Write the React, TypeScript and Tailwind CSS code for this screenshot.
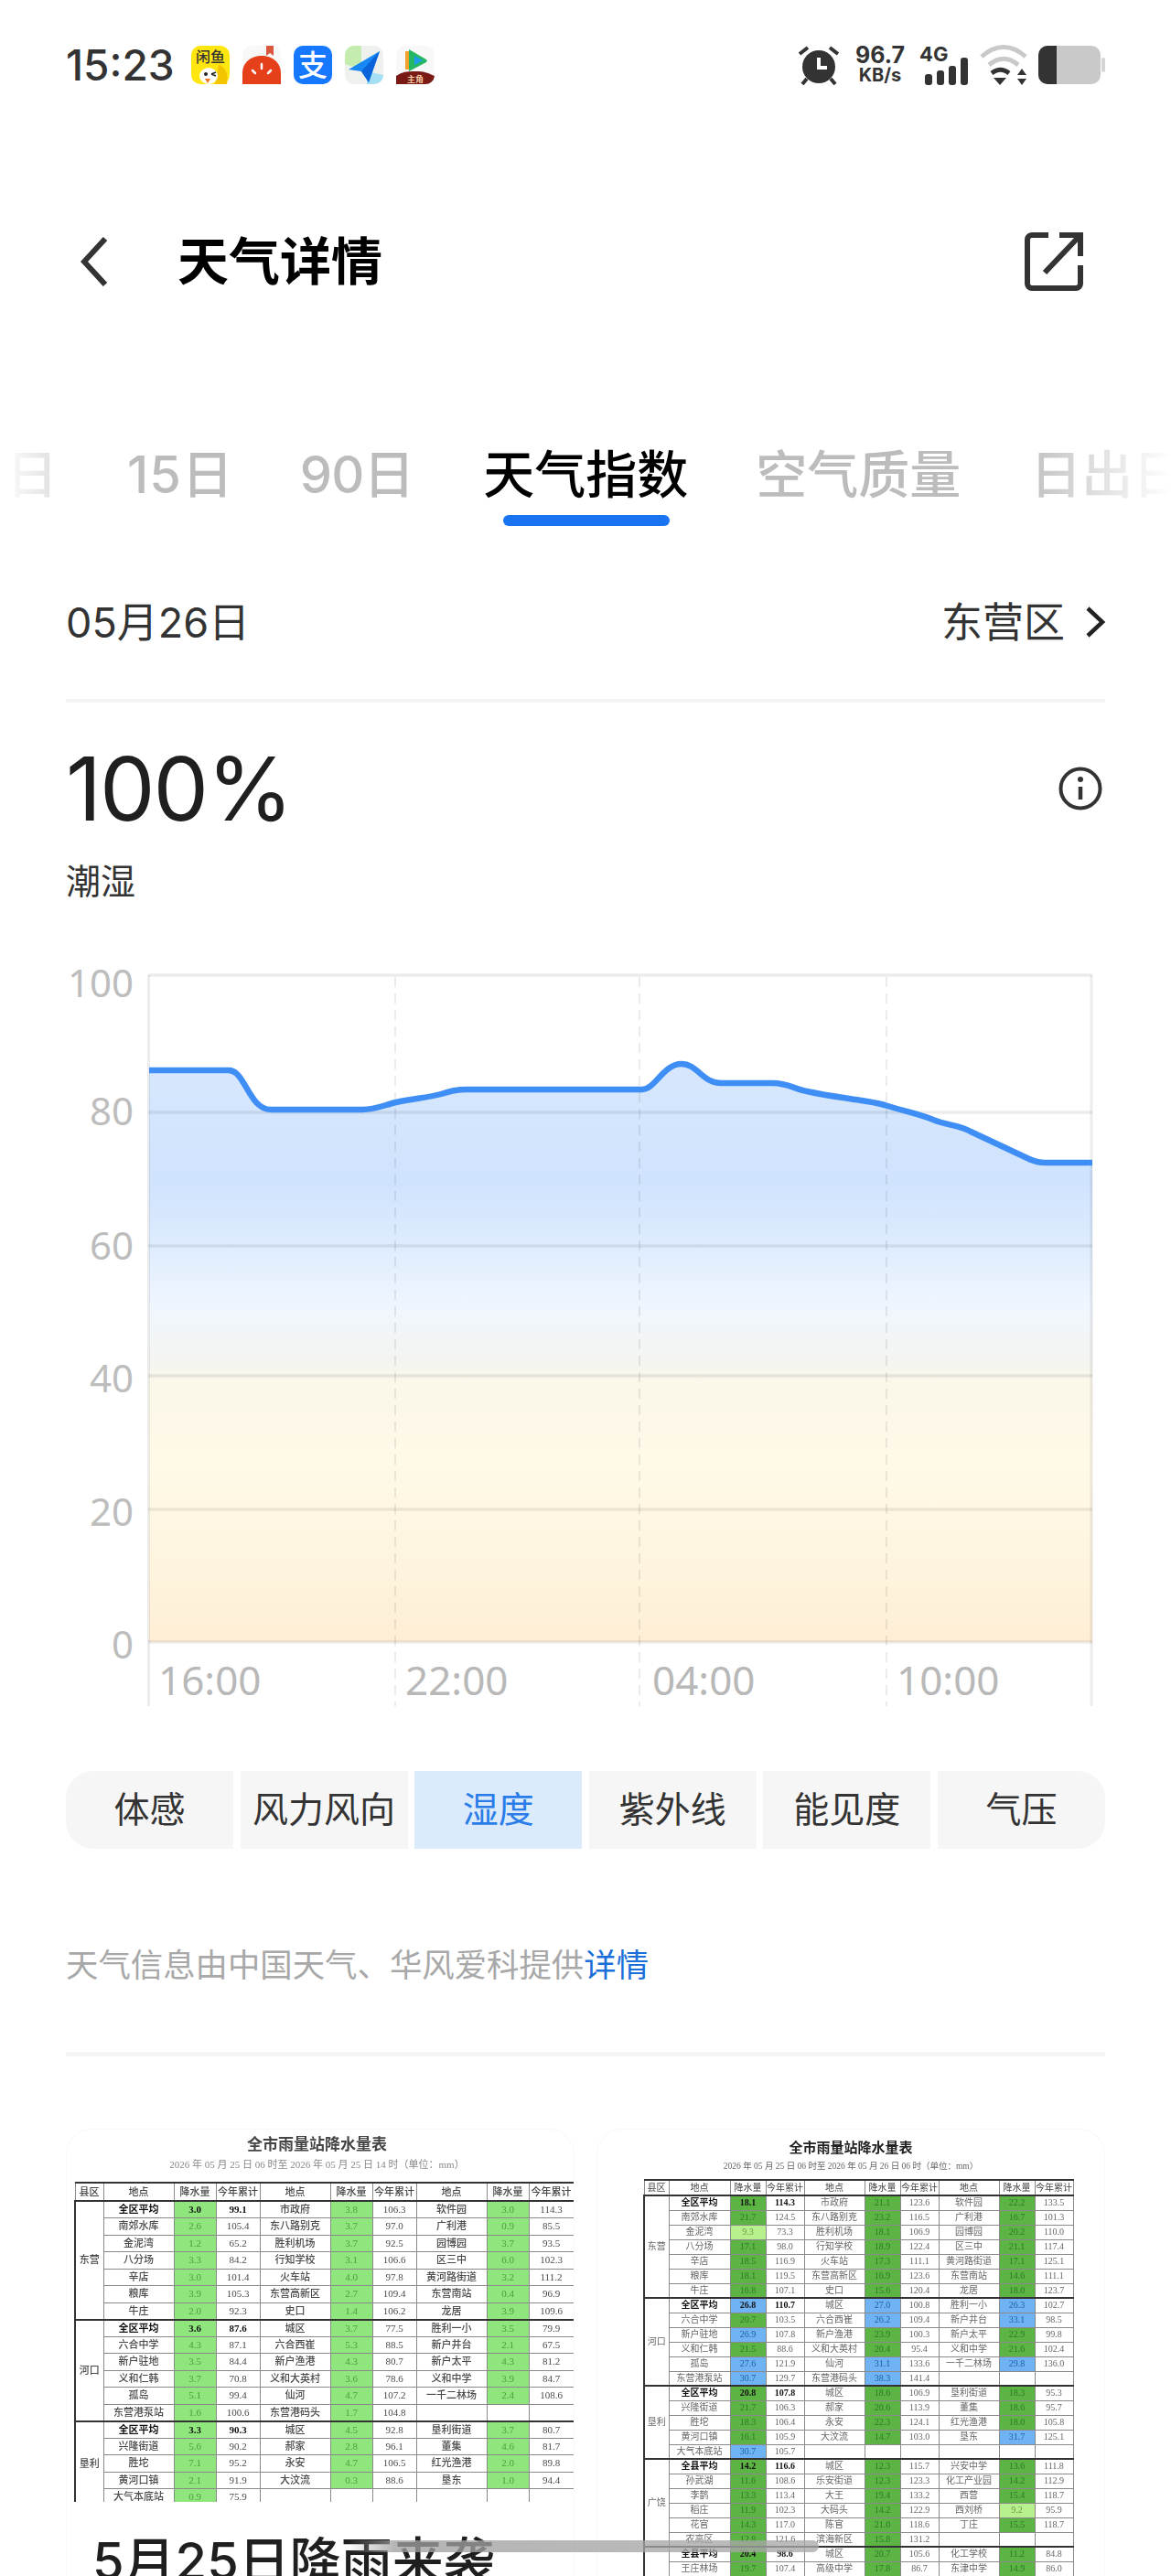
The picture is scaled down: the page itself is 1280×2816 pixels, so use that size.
import React from "react";

type Cell = [string, number, string] | null;
type Group = { name: string; rows: Cell[][] };

const groupsLeft: Group[] = [
  {
    name: "东营",
    rows: [
      [["全区平均", 3.0, "99.1"], ["市政府", 3.8, "106.3"], ["软件园", 3.0, "114.3"]],
      [["南郊水库", 2.6, "105.4"], ["东八路别克", 3.7, "97.0"], ["广利港", 0.9, "85.5"]],
      [["金泥湾", 1.2, "65.2"], ["胜利机场", 3.7, "92.5"], ["园博园", 3.7, "93.5"]],
      [["八分场", 3.3, "84.2"], ["行知学校", 3.1, "106.6"], ["区三中", 6.0, "102.3"]],
      [["辛店", 3.0, "101.4"], ["火车站", 4.0, "97.8"], ["黄河路街道", 3.2, "111.2"]],
      [["粮库", 3.9, "105.3"], ["东营高新区", 2.7, "109.4"], ["东营南站", 0.4, "96.9"]],
      [["牛庄", 2.0, "92.3"], ["史口", 1.4, "106.2"], ["龙居", 3.9, "109.6"]],
    ],
  },
  {
    name: "河口",
    rows: [
      [["全区平均", 3.6, "87.6"], ["城区", 3.7, "77.5"], ["胜利一小", 3.5, "79.9"]],
      [["六合中学", 4.3, "87.1"], ["六合西崔", 5.3, "88.5"], ["新户井台", 2.1, "67.5"]],
      [["新户驻地", 3.5, "84.4"], ["新户渔港", 4.3, "80.7"], ["新户太平", 4.3, "81.2"]],
      [["义和仁韩", 3.7, "70.8"], ["义和大英村", 3.6, "78.6"], ["义和中学", 3.9, "84.7"]],
      [["孤岛", 5.1, "99.4"], ["仙河", 4.7, "107.2"], ["一千二林场", 2.4, "108.6"]],
      [["东营港泵站", 1.6, "100.6"], ["东营港码头", 1.7, "104.8"], null],
    ],
  },
  {
    name: "垦利",
    rows: [
      [["全区平均", 3.3, "90.3"], ["城区", 4.5, "92.8"], ["垦利街道", 3.7, "80.7"]],
      [["兴隆街道", 5.6, "90.2"], ["郝家", 2.8, "96.1"], ["董集", 4.6, "81.7"]],
      [["胜坨", 7.1, "95.2"], ["永安", 4.7, "106.5"], ["红光渔港", 2.0, "89.8"]],
      [["黄河口镇", 2.1, "91.9"], ["大汶流", 0.3, "88.6"], ["垦东", 1.0, "94.4"]],
      [["大气本底站", 0.9, "75.9"], null, null],
    ],
  },
];

const groupsRight: Group[] = [
  {
    name: "东营",
    rows: [
      [["全区平均", 18.1, "114.3"], ["市政府", 21.1, "123.6"], ["软件园", 22.2, "133.5"]],
      [["南郊水库", 21.7, "124.5"], ["东八路别克", 23.2, "116.5"], ["广利港", 16.7, "101.3"]],
      [["金泥湾", 9.3, "73.3"], ["胜利机场", 18.1, "106.9"], ["园博园", 20.2, "110.0"]],
      [["八分场", 17.1, "98.0"], ["行知学校", 18.9, "122.4"], ["区三中", 21.1, "117.4"]],
      [["辛店", 18.5, "116.9"], ["火车站", 17.3, "111.1"], ["黄河路街道", 17.1, "125.1"]],
      [["粮库", 18.1, "119.5"], ["东营高新区", 16.9, "123.6"], ["东营南站", 14.6, "111.1"]],
      [["牛庄", 16.8, "107.1"], ["史口", 15.6, "120.4"], ["龙居", 18.0, "123.7"]],
    ],
  },
  {
    name: "河口",
    rows: [
      [["全区平均", 26.8, "110.7"], ["城区", 27.0, "100.8"], ["胜利一小", 26.3, "102.7"]],
      [["六合中学", 20.7, "103.5"], ["六合西崔", 26.2, "109.4"], ["新户井台", 33.1, "98.5"]],
      [["新户驻地", 26.9, "107.8"], ["新户渔港", 23.9, "100.3"], ["新户太平", 22.9, "99.8"]],
      [["义和仁韩", 21.5, "88.6"], ["义和大英村", 20.4, "95.4"], ["义和中学", 21.6, "102.4"]],
      [["孤岛", 27.6, "121.9"], ["仙河", 31.1, "133.6"], ["一千二林场", 29.8, "136.0"]],
      [["东营港泵站", 30.7, "129.7"], ["东营港码头", 38.3, "141.4"], null],
    ],
  },
  {
    name: "垦利",
    rows: [
      [["全区平均", 20.8, "107.8"], ["城区", 18.6, "106.9"], ["垦利街道", 18.3, "95.3"]],
      [["兴隆街道", 21.7, "106.3"], ["郝家", 20.6, "113.9"], ["董集", 18.6, "95.7"]],
      [["胜坨", 18.3, "106.4"], ["永安", 22.3, "124.1"], ["红光渔港", 18.0, "105.8"]],
      [["黄河口镇", 16.1, "105.9"], ["大汶流", 14.7, "103.0"], ["垦东", 31.7, "125.1"]],
      [["大气本底站", 30.7, "105.7"], null, null],
    ],
  },
  {
    name: "广饶",
    rows: [
      [["全县平均", 14.2, "116.6"], ["城区", 12.3, "115.7"], ["兴安中学", 13.6, "111.8"]],
      [["孙武湖", 11.6, "108.6"], ["乐安街道", 12.3, "123.3"], ["化工产业园", 14.2, "112.9"]],
      [["李鹊", 13.3, "113.4"], ["大王", 19.4, "133.2"], ["西营", 15.4, "118.7"]],
      [["稻庄", 11.9, "102.3"], ["大码头", 14.2, "122.9"], ["西刘桥", 9.2, "95.9"]],
      [["花官", 14.3, "117.0"], ["陈官", 21.0, "118.6"], ["丁庄", 15.5, "118.7"]],
      [["农高区", 12.8, "121.6"], ["滨海新区", 15.8, "131.2"], null],
    ],
  },
  {
    name: "",
    rows: [
      [["全县平均", 20.4, "98.6"], ["城区", 20.7, "105.6"], ["化工学校", 11.2, "84.8"]],
      [["王庄林场", 19.7, "107.4"], ["高级中学", 17.8, "86.7"], ["东津中学", 14.9, "86.0"]],
    ],
  },
];

const rainClassLeft = () => "bg-[#8fe67c] text-[#4f9c40]";
const rainClassRight = (v: number) => {
  if (v < 10) return "bg-[#b9f08e] text-[#6a9a45]";
  if (v < 25) return "bg-[#5cb444] text-[#2c7a22]";
  return "bg-[#6fb3f5] text-[#1d5fa8]";
};

const RainTable = ({
  groups,
  cols,
  rowClass,
  headClass,
  rainClass,
  tableClass,
}: {
  groups: Group[];
  cols: string[];
  rowClass: string;
  headClass: string;
  rainClass: (v: number) => string;
  tableClass: string;
}) => {
  const cell = "border border-[#8a8a8a] p-0 text-center whitespace-nowrap overflow-hidden";
  const thick = "border-t-2 border-t-[#333]";
  return (
    <table className={`table-fixed border-collapse font-['Liberation_Serif','Noto_Sans_CJK_SC',serif] leading-none ${tableClass}`}>
      <colgroup>
        {cols.map((c, i) => (
          <col key={i} className={c} />
        ))}
      </colgroup>
      <thead>
        <tr className={headClass}>
          <td className={`${cell} border-t-2 border-t-[#333] text-[#444]`}>县区</td>
          {[0, 1, 2].map((i) => (
            <React.Fragment key={i}>
              <td className={`${cell} border-t-2 border-t-[#333] text-[#444]`}>地点</td>
              <td className={`${cell} border-t-2 border-t-[#333] text-[#444]`}>降水量</td>
              <td className={`${cell} border-t-2 border-t-[#333] text-[#444]`}>今年累计</td>
            </React.Fragment>
          ))}
        </tr>
      </thead>
      <tbody>
        {groups.map((g) =>
          g.rows.map((row, r) => (
            <tr key={g.name + r} className={rowClass}>
              {r === 0 && (
                <td rowSpan={g.rows.length} className={`${cell} ${thick} border-l-2 border-l-[#333]`}>
                  {g.name}
                </td>
              )}
              {row.map((c, i) => {
                const top = r === 0 ? thick : "";
                const bold = r === 0 && i === 0 ? "font-bold text-[#111]" : "";
                if (!c) {
                  return (
                    <React.Fragment key={i}>
                      <td className={`${cell} ${top}`} />
                      <td className={`${cell} ${top}`} />
                      <td className={`${cell} ${top}`} />
                    </React.Fragment>
                  );
                }
                return (
                  <React.Fragment key={i}>
                    <td className={`${cell} ${top} ${bold}`}>{c[0]}</td>
                    <td className={`${cell} ${top} ${rainClass(c[1])} ${bold}`}>{c[1].toFixed(1)}</td>
                    <td className={`${cell} ${top} ${bold}`}>{c[2]}</td>
                  </React.Fragment>
                );
              })}
            </tr>
          ))
        )}
      </tbody>
    </table>
  );
};

const AppIcons = () => {
  return (
    <div className="flex gap-[14px] ml-[18px]">
      <svg width="42" height="42" viewBox="0 0 42 42">
        <rect width="42" height="42" rx="10" fill="#ffe60f" />
        <text x="21" y="18" textAnchor="middle" fontSize="16" fontWeight="500" fill="#333" fontFamily="Noto Sans CJK SC">闲鱼</text>
        <path d="M30 20c8 4 11 12 9 22H26z" fill="#f3c400" />
        <ellipse cx="19" cy="33" rx="10" ry="9" fill="#fff" />
        <circle cx="16" cy="31" r="2" fill="#222" />
        <path d="M22 31l5-2m-5 2l5 2" stroke="#222" strokeWidth="1.4" />
        <path d="M15 36h6l-3 5z" fill="#f2771b" />
      </svg>
      <svg width="42" height="42" viewBox="0 0 42 42">
        <rect width="42" height="42" rx="10" fill="#f8f8f8" />
        <path d="M26 0h8v11l-4-3-4 3z" fill="#d9573e" />
        <path d="M0 42V30C0 18 10 11 21 11s21 7 21 19v12z" fill="#e5401a" />
        <path d="M21 20v5M11 27l3 3M31 27l-3 3" stroke="#fff" strokeWidth="2.5" strokeLinecap="round" />
      </svg>
      <svg width="42" height="42" viewBox="0 0 42 42">
        <rect width="42" height="42" rx="10" fill="#1677ff" />
        <text x="21" y="33" textAnchor="middle" fontSize="32" fontWeight="500" fill="#fff" fontFamily="Noto Sans CJK SC">支</text>
      </svg>
      <svg width="42" height="42" viewBox="0 0 42 42">
        <rect width="42" height="42" rx="10" fill="#eef1ee" />
        <path d="M0 10a10 10 0 0 1 10-10h8v26L0 20z" fill="#c4ecae" />
        <path d="M24 42V28l18 4v0a10 10 0 0 1-10 10z" fill="#a5dff5" />
        <path d="M38 6L4 26l14 2 8 12z" fill="#1687f5" />
        <path d="M38 6L18 28l8 12z" fill="#0a63d8" />
      </svg>
      <svg width="42" height="42" viewBox="0 0 42 42">
        <rect width="42" height="42" rx="10" fill="#f8f8f8" />
        <path d="M10 6h8v20h-8z" fill="#f2a12c" />
        <path d="M14 4l19 11a2 2 0 0 1 0 3L14 28z" fill="#25b864" />
        <path d="M20 11l9 5-9 5z" fill="#1c9bf0" />
        <path d="M0 42V33c6-4 10-5 21-5s14 2 21 5v0a10 10 0 0 1-10 9z" fill="#7a1a14" />
        <text x="21" y="40" textAnchor="middle" fontSize="9" fontWeight="700" fill="#f3c9a0" fontFamily="Noto Sans CJK SC">主角</text>
      </svg>
    </div>
  );
};

const StatusRight = () => {
  return (
    <div className="flex items-center">
      <svg width="46" height="44" viewBox="0 0 46 44" className="mr-[18px]">
        <circle cx="23" cy="24" r="18" fill="#333" />
        <path d="M23 14v11h9" stroke="#fff" strokeWidth="4" fill="none" />
        <path d="M2 10l9-7M44 10l-9-7" stroke="#333" strokeWidth="4" />
        <path d="M10 37l-5 6M36 37l5 6" stroke="#333" strokeWidth="4" />
      </svg>
      <div className="flex flex-col items-center w-[52px] mr-[20px] font-bold text-[#333] leading-none">
        <span className="text-[25px] leading-[23px]">96.7</span>
        <span className="text-[20px] leading-[21px]">KB/s</span>
      </div>
      <div className="relative w-[50px] h-[44px] mr-[13px]">
        <span className="absolute left-[-3px] top-[-2px] text-[22px] leading-[24px] font-bold text-[#333]">4G</span>
        <svg width="50" height="44" viewBox="0 0 50 44">
          <rect x="3" y="32" width="8" height="12" rx="3" fill="#333" />
          <rect x="16" y="28" width="8" height="16" rx="3" fill="#333" />
          <rect x="29" y="23" width="8" height="21" rx="3" fill="#333" />
          <rect x="42" y="14" width="8" height="30" rx="3" fill="#333" />
        </svg>
      </div>
      <svg width="52" height="44" viewBox="0 0 52 44" className="mr-[12px]">
        <path d="M2 13c15-14 33-14 48 0" stroke="#c9c9c9" strokeWidth="5" fill="none" />
        <path d="M10 22c11-9 21-9 32 0" stroke="#c9c9c9" strokeWidth="5" fill="none" />
        <path d="M13 31c7-5 12-5 19 0" stroke="#333" strokeWidth="5" fill="none" />
        <path d="M15 36h14l-7 8z" fill="#333" />
        <path d="M46 26l5 7H41z" fill="#333" />
        <path d="M46 44l5-7H41z" fill="#333" />
      </svg>
      <svg width="73" height="44" viewBox="0 0 73 44">
        <rect x="0" y="1" width="68" height="42" rx="10" fill="#c9c9c9" />
        <rect x="69" y="14" width="4" height="16" rx="2" fill="#d5d5d5" />
        <path d="M10 1h10v42H10A10 10 0 0 1 0 33V11A10 10 0 0 1 10 1z" fill="#333" />
      </svg>
    </div>
  );
};

const Chart = () => {
  const line =
    "M163 130H250C268 130 272 173 296 173H396C410 173 420 168 433 165C450 161 468 160 482 156C495 152 500 151 514 151H702C716 151 725 123 745 123C762 123 768 144 788 144H845C860 144 868 150 882 153C896 156 908 158 922 160C940 163 952 164 967 168C985 174 1003 177 1020 184C1034 190 1050 190 1061 197L1125 227C1131 230 1135 231 1143 231H1194";
  const grid = [26, 176, 322, 464, 610, 755];
  return (
    <svg width="1280" height="830" viewBox="0 0 1280 830" className="block mt-[54px]">
      <defs>
        <linearGradient id="humidityFill" gradientUnits="userSpaceOnUse" x1="0" y1="130" x2="0" y2="755">
          <stop offset="0" stopColor="#d6e7fd" />
          <stop offset="0.2" stopColor="#d0e3fd" />
          <stop offset="0.307" stopColor="#deecfe" />
          <stop offset="0.416" stopColor="#f0f6fe" />
          <stop offset="0.512" stopColor="#f4f5f0" />
          <stop offset="0.544" stopColor="#fbf7e9" />
          <stop offset="0.688" stopColor="#fef9e8" />
          <stop offset="0.848" stopColor="#fef5df" />
          <stop offset="1" stopColor="#feeed6" />
        </linearGradient>
      </defs>
      <path d={`${line}V755H163Z`} fill="url(#humidityFill)" />
      {grid.map((y) => (
        <line key={y} x1="162" x2="1194" y1={y} y2={y} stroke="#000" strokeOpacity="0.075" strokeWidth="3.5" />
      ))}
      <line x1="162.5" x2="162.5" y1="26" y2="825" stroke="#000" strokeOpacity="0.075" strokeWidth="3" />
      <line x1="1193" x2="1193" y1="26" y2="825" stroke="#000" strokeOpacity="0.075" strokeWidth="3" />
      {[432, 699, 969].map((x) => (
        <line key={x} x1={x} x2={x} y1="28" y2="825" stroke="#000" strokeOpacity="0.08" strokeWidth="2" strokeDasharray="11 7" />
      ))}
      <path d={line} fill="none" stroke="#3f8ef5" strokeWidth="6.5" strokeLinejoin="round" />
      {[
        ["100", 50],
        ["80", 190],
        ["60", 337],
        ["40", 482],
        ["20", 628],
        ["0", 773],
      ].map(([t, y]) => (
        <text key={t} x="146" y={y} textAnchor="end" className="font-['Noto_Sans'] text-[42px] fill-[#bdbdbd]">
          {t}
        </text>
      ))}
      {[
        ["16:00", 173],
        ["22:00", 443],
        ["04:00", 713],
        ["10:00", 980],
      ].map(([t, x]) => (
        <text key={t} x={x} y="813" className="font-['Noto_Sans'] text-[44px] fill-[#b8b8b8]">
          {t}
        </text>
      ))}
    </svg>
  );
};

const segments = ["体感", "风力风向", "湿度", "紫外线", "能见度", "气压"];

const App = () => {
  return (
    <div className="relative w-[1280px] h-[2816px] overflow-hidden bg-white font-['Inter','Noto_Sans_CJK_SC',sans-serif]">
      {/* status bar */}
      <div className="flex items-center justify-between h-[142px] px-[72px]">
        <div className="flex items-center">
          <span className="text-[46px] leading-none font-medium text-[#333]">15:23</span>
          <AppIcons />
        </div>
        <StatusRight />
      </div>

      {/* header */}
      <div className="flex items-center justify-between h-[286px] pl-[88px] pr-[96px] pt-[2px]">
        <div className="flex items-center">
          <svg width="30" height="54" viewBox="0 0 30 54">
            <path d="M27 2L4 27l23 25" stroke="#333" strokeWidth="6" fill="none" />
          </svg>
          <span className="ml-[76px] text-[56px] leading-none font-bold text-black">天气详情</span>
        </div>
        <svg width="64" height="64" viewBox="0 0 64 64">
          <path d="M26 3H8a5 5 0 0 0-5 5v48a5 5 0 0 0 5 5h48a5 5 0 0 0 5-5V36" stroke="#333" strokeWidth="6" fill="none" />
          <path d="M22 44L60 4M38 3h23v23" stroke="#333" strokeWidth="6" fill="none" />
        </svg>
      </div>

      {/* tabs */}
      <div className="relative flex items-center gap-[76px] h-[182px] pl-[7px] overflow-hidden whitespace-nowrap text-[56px] leading-[72px] font-medium text-[#bcbcbc]">
        <span className="shrink-0">日</span>
        <span className="shrink-0 tracking-[1px]">15日</span>
        <span className="shrink-0 tracking-[-1px] -ml-[4px]">90日</span>
        <span className="relative shrink-0 text-black">
          天气指数
          <span className="absolute left-[22px] top-[80px] w-[182px] h-[12px] rounded-full bg-[#1a73f0]" />
        </span>
        <span className="shrink-0 -ml-[2px]">空气质量</span>
        <span className="shrink-0">日出日落</span>
        <div className="absolute left-0 top-0 bottom-0 w-[130px] bg-gradient-to-r from-white to-transparent" />
        <div className="absolute right-0 top-0 bottom-0 w-[170px] bg-gradient-to-l from-white to-transparent" />
      </div>

      {/* date row */}
      <div className="flex items-center justify-between h-[140px] mx-[72px] text-[45px] leading-none text-[#333]">
        <span>05月26日</span>
        <div className="flex items-center">
          <span>东营区</span>
          <svg width="22" height="34" viewBox="0 0 22 34" className="ml-[22px]">
            <path d="M3 2l16 15L3 32" stroke="#222" strokeWidth="4.5" fill="none" />
          </svg>
        </div>
      </div>
      <div className="mx-[72px] mt-[14px] h-[4px] bg-[#f3f3f3]" />

      {/* current value */}
      <div className="flex items-center justify-between h-[100px] mt-[44px] mx-[72px] pr-[3px]">
        <span className="text-[96px] leading-none tracking-[-2px] text-[#1f1f1f]">100%</span>
        <svg width="48" height="48" viewBox="0 0 48 48">
          <circle cx="24" cy="24" r="21.5" stroke="#333" strokeWidth="4" fill="none" />
          <circle cx="24" cy="14" r="3" fill="#333" />
          <path d="M24 22v14" stroke="#333" strokeWidth="4.5" />
        </svg>
      </div>
      <div className="mt-[28px] ml-[72px] h-[46px] text-[38px] leading-[46px] text-[#333]">潮湿</div>

      <Chart />

      {/* metric switch */}
      <div className="flex gap-[7.6px] mx-[72px] mt-[66px] h-[85px] rounded-[30px] overflow-hidden">
        {segments.map((s) => (
          <div
            key={s}
            className={
              s === "湿度"
                ? "flex-1 flex items-center justify-center text-[39px] bg-[#dcebfc] text-[#2a7de8]"
                : "flex-1 flex items-center justify-center text-[39px] bg-[#f6f6f6] text-[#333]"
            }
          >
            {s}
          </div>
        ))}
      </div>

      {/* source */}
      <div className="mt-[108px] ml-[72px] h-[40px] text-[35.4px] leading-[40px] text-[#a8a8a8]">
        天气信息由中国天气、华风爱科提供<span className="text-[#1a6fd8]">详情</span>
      </div>
      <div className="mx-[72px] mt-[74px] h-[5px] bg-[#f5f5f5]" />

      {/* news cards */}
      <div className="flex gap-[24px] mx-[72px] mt-[79px]">
        <div className="w-[556px] h-[520px] overflow-hidden rounded-t-[28px] border-t border-x border-[#f8f8f8]">
          <div className="h-[407px] overflow-hidden blur-[0.7px]">
            <div className="pt-[5px] pr-[7px] text-center text-[17px] leading-[22px] font-bold text-[#444]">全市雨量站降水量表</div>
            <div className="mt-[4px] pr-[7px] text-center text-[11px] leading-[14px] text-[#888] font-['Liberation_Serif','Noto_Sans_CJK_SC',serif]">
              2026 年 05 月 25 日 06 时至 2026 年 05 月 25 日 14 时（单位：mm）
            </div>
            <div className="mt-[12px] ml-[8px]">
              <RainTable
                groups={groupsLeft}
                cols={["w-[31px]", "w-[77px]", "w-[46px]", "w-[48px]", "w-[77px]", "w-[46px]", "w-[48px]", "w-[77px]", "w-[46px]", "w-[49px]"]}
                rowClass="h-[18.5px]"
                headClass="h-[20px]"
                rainClass={rainClassLeft}
                tableClass="w-[545px] text-[11px] font-medium text-[#4a4a4a]"
              />
            </div>
          </div>
          <div className="mt-[29px] ml-[28px] text-[56px] leading-[72px] font-medium text-[#1f1f1f] whitespace-nowrap">5月25日降雨来袭</div>
        </div>
        <div className="w-[556px] h-[520px] overflow-hidden rounded-t-[28px] border-t border-x border-[#f8f8f8] blur-[0.3px]">
          <div className="pt-[10px] text-center text-[15px] leading-[20px] font-bold text-[#222]">全市雨量站降水量表</div>
          <div className="mt-[3px] text-center text-[9.5px] leading-[14px] text-[#666] font-['Liberation_Serif','Noto_Sans_CJK_SC',serif]">
            2026 年 05 月 25 日 06 时至 2026 年 05 月 26 日 06 时（单位：mm）
          </div>
          <div className="mt-[7px] ml-[50px]">
            <RainTable
              groups={groupsRight}
              cols={["w-[27px]", "w-[67px]", "w-[39px]", "w-[42px]", "w-[66px]", "w-[39px]", "w-[42px]", "w-[66px]", "w-[39px]", "w-[42px]"]}
              rowClass="h-[16px]"
              headClass="h-[17px]"
              rainClass={rainClassRight}
              tableClass="w-[469px] text-[10px] text-[#666]"
            />
          </div>
        </div>
      </div>

      {/* gesture bar over the page */}
      <div className="absolute left-[380px] top-[2777px] w-[515px] h-[13px] rounded-r-full bg-gradient-to-r from-transparent via-[#9e9e9ec4] via-[10%] to-[#a8a8a8c4]" />
    </div>
  );
};

export default App;
